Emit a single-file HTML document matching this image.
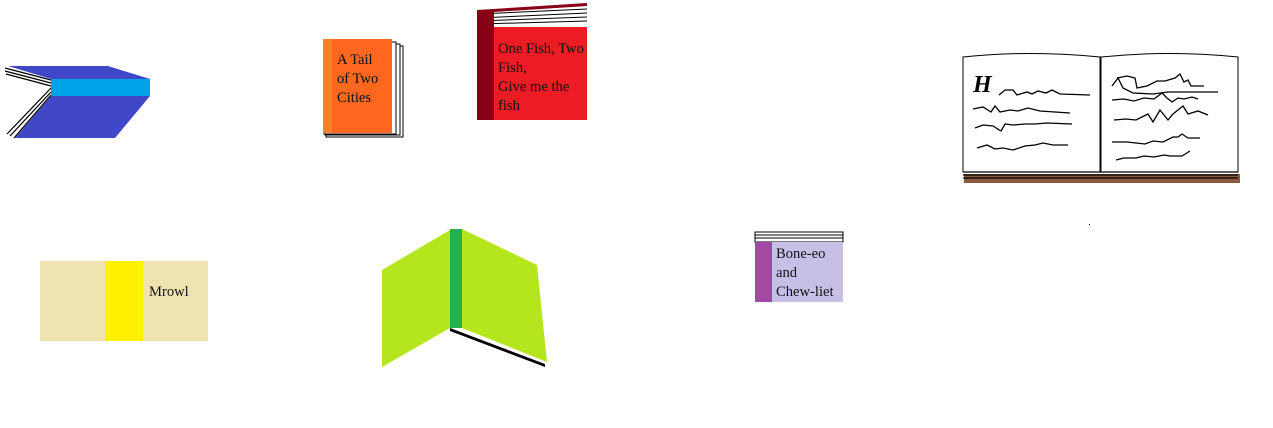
<!DOCTYPE html>
<html><head><style>
body{margin:0;width:1273px;height:428px;background:#fff;position:relative;overflow:hidden;font-family:"Liberation Serif",serif;}
.t{position:absolute;font-size:14.6px;line-height:19px;color:#111;}
</style></head><body>
<svg width="1273" height="428" style="position:absolute;left:0;top:0">
<polygon points="8,66 108,66 150,79 51,79" fill="#4048c8"/>
<rect x="51" y="79" width="99" height="17" fill="#00a2e8"/>
<polygon points="51,96 150,96 115,138 15,138" fill="#4048c8"/>
<g stroke="#000" stroke-width="1.2" fill="none">
<line x1="5" y1="68" x2="51" y2="80"/><line x1="5" y1="71" x2="51" y2="83"/><line x1="6" y1="74" x2="51" y2="86"/>
<line x1="51" y1="88" x2="7" y2="134"/><line x1="51" y1="92" x2="10" y2="136"/><line x1="51" y1="95" x2="14" y2="138"/>
</g>
<g stroke="#000" stroke-width="1" fill="#fff">
<rect x="326" y="46" width="77" height="91"/><rect x="325" y="44" width="75" height="91"/><rect x="324" y="42" width="72" height="92"/>
</g>
<rect x="323" y="39" width="69" height="94" fill="#ff661f"/>
<rect x="323" y="39" width="9" height="94" fill="#ff7f27"/>
<polygon points="477,10 587,4 587,27 477,27" fill="#fff"/>
<g stroke="#000" stroke-width="1"><line x1="479" y1="14" x2="587" y2="9"/><line x1="479" y1="18" x2="587" y2="13"/><line x1="479" y1="21" x2="587" y2="17"/><line x1="479" y1="24" x2="587" y2="21"/></g>
<polygon points="477,10 587,3 587,6 494,12 494,27 477,27" fill="#880015"/>
<rect x="477" y="27" width="110" height="93" fill="#ed1c24"/>
<rect x="477" y="10" width="17" height="110" fill="#880015"/>
<rect x="40" y="261" width="168" height="80" fill="#efe4b0"/>
<rect x="105" y="261" width="38" height="80" fill="#fff200"/>
<polygon points="450,328 545,364 545,367 450,331" fill="#000"/>
<polygon points="382,270 450,230 450,328 382,367" fill="#b5e61d"/>
<polygon points="462,229 537,265 547,362 462,328" fill="#b5e61d"/>
<rect x="450" y="229" width="12" height="99" fill="#22b14c"/>
<rect x="755" y="232" width="88" height="10" fill="#fff" stroke="#000" stroke-width="1"/>
<g stroke="#000"><line x1="755" y1="235" x2="843" y2="235"/><line x1="755" y1="238" x2="843" y2="238"/></g>
<rect x="755" y="242" width="88" height="60" fill="#c8bfe7"/>
<rect x="755" y="242" width="17" height="60" fill="#a349a4"/>
<rect x="964" y="174" width="276" height="9" fill="#8b5a3c"/>
<g stroke="#000" stroke-width="1" fill="#fff">
<path d="M963,57 Q1030,50 1100,57 L1100,172 L963,172 Z"/>
<path d="M1101,57 Q1170,50 1238,57 L1238,172 L1101,172 Z"/>
</g>
<g stroke="#000" stroke-width="1.3" fill="none">
<line x1="963" y1="172" x2="1238" y2="172"/><line x1="963" y1="175" x2="1238" y2="175"/><line x1="963" y1="178" x2="1238" y2="178"/>
<path d="M999,95 l6,-5 l8,0 l4,5 l10,-3 l5,2 l6,-3 l8,2 l6,-3 l8,4 l30,1"/>
<path d="M973,109 l10,-2 l8,5 l4,-6 l5,6 l10,-2 l8,1 l10,-3 l12,3 l30,2"/>
<path d="M975,128 l8,-3 l10,1 l8,5 l4,-7 l8,1 l12,-1 l10,0 l12,-1 l25,1"/>
<path d="M977,148 l10,-3 l8,4 l8,-1 l10,2 l12,-4 l10,-1 l8,-2 l10,2 l15,0"/>
<path d="M1117,78 l10,-2 l8,2 l2,10 l10,-2 l10,-5 l8,0 l10,-3 l5,-4 l4,8 l4,-2 l3,6 l13,0"/>
<path d="M1112,86 l6,-8 l5,10 l10,5 l20,1 l15,-2 l30,0 l20,0"/>
<path d="M1112,100 l12,-1 l10,2 l10,-3 l10,1 l8,-6 l5,5 l5,4 l6,-4 l6,1 l8,-2 l6,2"/>
<path d="M1114,120 l12,-1 l10,1 l12,-6 l5,8 l7,-12 l8,10 l5,-6 l10,-8 l5,8 l10,-3 l10,4"/>
<path d="M1112,142 l15,0 l18,2 l8,-3 l10,1 l10,-5 l5,0 l4,-3 l6,4 l12,0"/>
<path d="M1116,160 l8,-2 l12,0 l8,-2 l10,1 l10,-2 l6,1 l12,0 l8,-5"/>
</g>
<rect x="1089" y="224" width="1" height="1" fill="#000"/>
</svg>
<div style="position:absolute;left:973px;top:72px;font-family:'Liberation Serif',serif;font-weight:bold;font-style:italic;font-size:24px;color:#000">H</div>
<div class="t" style="left:337px;top:51px;width:56px">A Tail<br>of Two<br>Cities</div>
<div class="t" style="left:498px;top:40px;width:95px">One Fish, Two<br>Fish,<br>Give me the<br>fish</div>
<div class="t" style="left:149px;top:283px">Mrowl</div>
<div class="t" style="left:776px;top:245px">Bone-eo<br>and<br>Chew-liet</div>
</body></html>
